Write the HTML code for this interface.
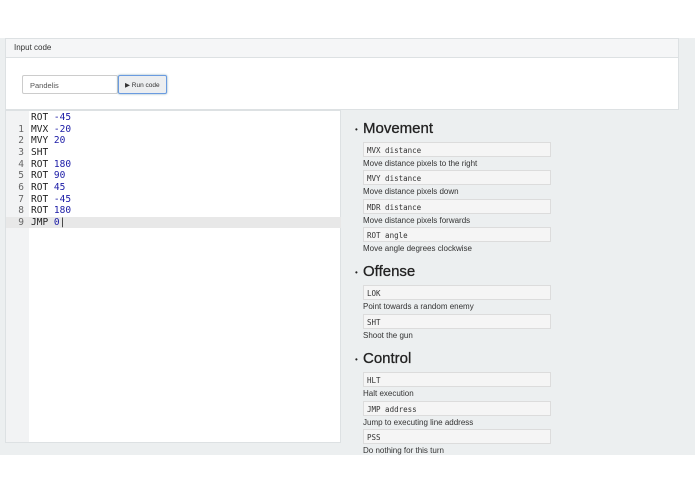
<!DOCTYPE html>
<html><head><style>
body{margin:0;width:695px;height:494px;background:#fff;position:relative;overflow:hidden;font-family:"Liberation Sans",sans-serif;}
.bg{position:absolute;left:0;top:38px;width:695px;height:417px;background:#eceff0;}
.panel{position:absolute;left:5px;top:38px;width:674px;height:72px;background:#fff;border:1px solid #dde1e3;box-sizing:border-box;}
.ph{height:19px;background:#f5f6f7;border-bottom:1px solid #dde1e3;font-size:8px;color:#333;padding:4px 0 0 8px;box-sizing:border-box;}
.inp{position:absolute;left:16px;top:36px;width:96px;height:19px;border:1px solid #ccc;box-sizing:border-box;font-size:7.5px;color:#555;padding:5px 0 0 7px;border-radius:2px;}
.btn{position:absolute;left:112px;top:36px;width:49px;height:19px;border:1px solid #6a9be0;box-shadow:0 0 2px #8ab;background:#eceef0;box-sizing:border-box;font-size:6.5px;color:#333;padding:5px 0 0 6px;border-radius:2px;}
.ed{position:absolute;left:5px;top:110px;width:336px;height:333px;background:#fff;border:1px solid #dde1e3;box-sizing:border-box;}
.gut{position:absolute;left:0;top:0;width:23px;height:100%;background:#f2f3f4;}
.hl{position:absolute;left:0;top:106px;width:335px;height:11px;background:#e8e8e8;}
.code{position:absolute;left:0;top:0;font-family:"DejaVu Sans Mono","Liberation Mono",monospace;font-size:9.5px;line-height:11.65px;}
.code div{white-space:pre;color:#222}
.ln{display:inline-block;width:18px;text-align:right;color:#666;margin-right:7px}
.n{color:#1a1aa6}
.r{position:absolute;left:363px;font-size:15px;color:#222;-webkit-text-stroke:0.3px #222;}
.r span{position:absolute;left:-8px;top:5px;font-size:8px;-webkit-text-stroke:0;}
.box{position:absolute;left:363px;width:188px;height:15px;background:#f5f5f5;border:1px solid #dcdcdc;box-sizing:border-box;font-family:"DejaVu Sans Mono",monospace;font-size:7.5px;color:#333;padding:3px 0 0 3px;}
.d{position:absolute;left:363px;font-size:8px;color:#333;}
</style></head><body>
<div class="bg"></div>
<div class="panel"><div class="ph">Input code</div>
<div class="inp">Pandelis</div><div class="btn">&#9654; Run code</div></div>
<div class="ed"><div class="gut"></div><div class="hl"></div>
<div class="code" style="top:1px">
<div><span class="ln"></span>ROT <span class="n">-45</span></div>
<div><span class="ln">1</span>MVX <span class="n">-20</span></div>
<div><span class="ln">2</span>MVY <span class="n">20</span></div>
<div><span class="ln">3</span>SHT</div>
<div><span class="ln">4</span>ROT <span class="n">180</span></div>
<div><span class="ln">5</span>ROT <span class="n">90</span></div>
<div><span class="ln">6</span>ROT <span class="n">45</span></div>
<div><span class="ln">7</span>ROT <span class="n">-45</span></div>
<div><span class="ln">8</span>ROT <span class="n">180</span></div>
<div><span class="ln">9</span>JMP <span class="n">0</span>|</div>
</div></div>
<div class="r" style="top:120px"><span>•</span>Movement</div>
<div class="box" style="top:142px">MVX distance</div><div class="d" style="top:159px">Move distance pixels to the right</div>
<div class="box" style="top:170px">MVY distance</div><div class="d" style="top:187px">Move distance pixels down</div>
<div class="box" style="top:199px">MDR distance</div><div class="d" style="top:216px">Move distance pixels forwards</div>
<div class="box" style="top:227px">ROT angle</div><div class="d" style="top:244px">Move angle degrees clockwise</div>
<div class="r" style="top:263px"><span>•</span>Offense</div>
<div class="box" style="top:285px">LOK</div><div class="d" style="top:302px">Point towards a random enemy</div>
<div class="box" style="top:314px">SHT</div><div class="d" style="top:331px">Shoot the gun</div>
<div class="r" style="top:350px"><span>•</span>Control</div>
<div class="box" style="top:372px">HLT</div><div class="d" style="top:389px">Halt execution</div>
<div class="box" style="top:401px">JMP address</div><div class="d" style="top:418px">Jump to executing line address</div>
<div class="box" style="top:429px">PSS</div><div class="d" style="top:446px">Do nothing for this turn</div>
</body></html>
